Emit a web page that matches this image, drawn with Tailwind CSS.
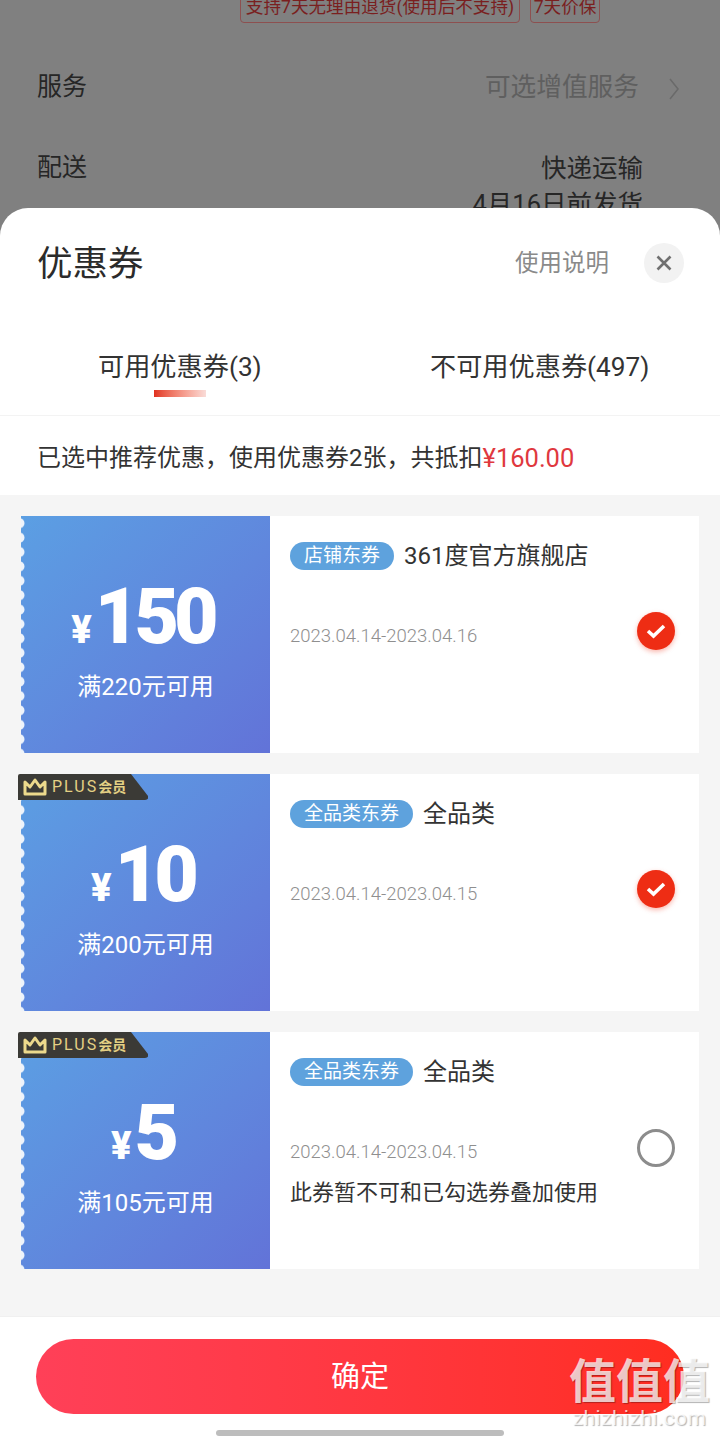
<!DOCTYPE html>
<html lang="zh">
<head>
<meta charset="UTF-8">
<meta name="viewport" content="width=device-width, initial-scale=1.0">
<title>优惠券</title>
<script src="https://cdn.jsdelivr.net/npm/@tailwindcss/browser@4"></script>
</head>
<body class="m-0 bg-[#808080] font-['Roboto','Noto_Sans_CJK_SC',sans-serif]">
<div class="relative w-[720px] h-[1436px] overflow-hidden">

  <!-- dimmed page behind the sheet -->
  <div class="h-[240px] -mb-[32px] overflow-hidden text-[25px] text-[#262626]">
    <div class="flex justify-end gap-[10px] pr-[120px] -mt-[8px] text-[17.6px] leading-[28px] text-[#7a1f1f]">
      <span class="border border-[#8d5050] rounded-[4px] w-[280px] text-center h-[31px] whitespace-nowrap">支持7天无理由退货(使用后不支持)</span>
      <span class="border border-[#8d5050] rounded-[4px] w-[70px] text-center h-[31px] whitespace-nowrap">7天价保</span>
    </div>
    <div class="flex items-center justify-between pl-[37px] pr-[41px] mt-[46px] h-[36px]">
      <span>服务</span>
      <span class="flex items-center text-[25.7px] text-[#5f5f5f]">可选增值服务
        <svg class="ml-[30px] mt-[3px]" width="10" height="22" viewBox="0 0 10 22" fill="none" stroke="#6a6a6a" stroke-width="1.6"><path d="M1 1l8 10-8 10"/></svg>
      </span>
    </div>
    <div class="flex justify-between pl-[37px] pr-[77px] mt-[45px] leading-[36px]">
      <span>配送</span>
      <div class="text-right text-[25.5px]"><div>快递运输</div><div>4月16日前发货</div></div>
    </div>
  </div>

  <!-- sheet -->
  <div class="relative bg-white rounded-t-[28px] h-[1228px] flex flex-col">
    <div class="flex items-center h-[112px] pl-[37px] pr-[36px]">
      <h1 class="text-[35.5px] font-normal text-[#2b2b2b] leading-none mt-[2px]">优惠券</h1>
      <span class="ml-auto text-[23.5px] text-[#8a8a8a]">使用说明</span>
      <span class="ml-[35px] -mt-[2px] w-[40px] h-[40px] rounded-full bg-[#f2f2f2] flex items-center justify-center">
        <svg width="16" height="16" viewBox="0 0 16 16" fill="none" stroke="#707070" stroke-width="2.6"><path d="M1.5 1.5l13 13M14.5 1.5l-13 13"/></svg>
      </span>
    </div>

    <div class="flex h-[96px] border-b border-[#f3f3f3] text-[26.2px] text-[#333]">
      <div class="relative w-[360px] pt-[27px] pl-[98px] leading-[40px]">可用优惠券(3)
        <div class="absolute left-[154px] top-[70px] w-[52px] h-[7px] bg-gradient-to-r from-[#e0301e] to-[#f9dcd8]"></div>
      </div>
      <div class="flex-1 pt-[27px] pl-[70px] leading-[40px]">不可用优惠券(497)</div>
    </div>

    <div class="h-[79px] pl-[37px] pt-[5px] flex items-center text-[24px] text-[#333]">已选中推荐优惠，使用优惠券2张，共抵扣<span class="text-[25.5px] text-[#e0383e]">¥160.00</span></div>

    <div class="flex-1 bg-[#f5f5f5] pt-[21px] pl-[21px] pr-[21px] flex flex-col gap-[21px]">

      <!-- coupon 1 -->
      <div class="relative flex h-[237px] bg-white">
        <div class="relative w-[249px] bg-gradient-to-br from-[#5b9fe3] to-[#6273d8] text-white flex flex-col items-center">
          <svg class="absolute left-0 top-0" width="5" height="237"><defs><pattern id="sc1" width="5" height="14.4" patternUnits="userSpaceOnUse"><circle cx="-1.5" cy="7.2" r="5" fill="#eef4fb"/></pattern></defs><rect width="5" height="237" fill="url(#sc1)"/></svg>
          <div class="flex items-baseline mt-[55px] h-[92px] -ml-[6px]">
            <span class="text-[38px] font-black leading-none mr-[3px]">¥</span>
            <span class="text-[77px] font-black leading-[92px] tracking-[-5px]">150</span>
          </div>
          <div class="text-[24px] leading-[30px] mt-[9px]">满220元可用</div>
        </div>
        <div class="relative flex-1 pl-[20px] pt-[26px]">
          <div class="flex items-center h-[28px]">
            <span class="bg-[#5ea2dd] text-white text-[19px] rounded-full w-[104px] h-[28px] leading-[28px] text-center">店铺东券</span>
            <span class="ml-[10px] text-[24px] text-[#333]">361度官方旗舰店</span>
          </div>
          <div class="mt-[52px] text-[18.5px] font-light text-[#8f8f8f] leading-[28px]">2023.04.14-2023.04.16</div>
          <span class="absolute left-[367px] top-[96px] w-[38px] h-[38px] rounded-full bg-[#ee2d14] flex items-center justify-center shadow-[0_2px_5px_rgba(238,45,20,0.35)]">
            <svg width="22" height="16" viewBox="0 0 22 16" fill="none" stroke="#fff" stroke-width="3.6"><path d="M3 8l5.5 5L19 3"/></svg>
          </span>
        </div>
      </div>

      <!-- coupon 2 -->
      <div class="relative flex h-[237px] bg-white">
        <div class="relative w-[249px] bg-gradient-to-br from-[#5b9fe3] to-[#6273d8] text-white flex flex-col items-center">
          <svg class="absolute left-0 top-0" width="5" height="237"><defs><pattern id="sc2" width="5" height="14.4" patternUnits="userSpaceOnUse"><circle cx="-1.5" cy="7.2" r="5" fill="#eef4fb"/></pattern></defs><rect width="5" height="237" fill="url(#sc2)"/></svg>
          <div class="flex items-baseline mt-[55px] h-[92px] -ml-[6px]">
            <span class="text-[38px] font-black leading-none mr-[3px]">¥</span>
            <span class="text-[77px] font-black leading-[92px] tracking-[-5px]">10</span>
          </div>
          <div class="text-[24px] leading-[30px] mt-[9px]">满200元可用</div>
        </div>
        <div class="absolute -left-[3px] top-0 w-[130px] h-[26px]">
          <svg class="absolute inset-0" width="130" height="26"><path d="M2 0H113L130 22Q131 26 127 26H0V2Q0 0 2 0Z" fill="#3b3a36"/></svg>
          <svg class="absolute left-[4px] top-[3px]" width="26" height="20" viewBox="0 0 26 20" fill="none" stroke="#ecd98c" stroke-width="3" stroke-linejoin="round"><path d="M3 5l5 5 5-7 5 7 5-5v12H3z"/></svg>
          <span class="absolute left-[34px] top-0 text-[16px] leading-[26px] tracking-[2px] text-[#e4d084] whitespace-nowrap">PLUS<span class="text-[14px] font-bold tracking-normal">会员</span></span>
        </div>
        <div class="relative flex-1 pl-[20px] pt-[26px]">
          <div class="flex items-center h-[28px]">
            <span class="bg-[#5ea2dd] text-white text-[19px] rounded-full w-[123px] h-[28px] leading-[28px] text-center">全品类东券</span>
            <span class="ml-[10px] text-[24px] text-[#333]">全品类</span>
          </div>
          <div class="mt-[52px] text-[18.5px] font-light text-[#8f8f8f] leading-[28px]">2023.04.14-2023.04.15</div>
          <span class="absolute left-[367px] top-[96px] w-[38px] h-[38px] rounded-full bg-[#ee2d14] flex items-center justify-center shadow-[0_2px_5px_rgba(238,45,20,0.35)]">
            <svg width="22" height="16" viewBox="0 0 22 16" fill="none" stroke="#fff" stroke-width="3.6"><path d="M3 8l5.5 5L19 3"/></svg>
          </span>
        </div>
      </div>

      <!-- coupon 3 -->
      <div class="relative flex h-[237px] bg-white">
        <div class="relative w-[249px] bg-gradient-to-br from-[#5b9fe3] to-[#6273d8] text-white flex flex-col items-center">
          <svg class="absolute left-0 top-0" width="5" height="237"><defs><pattern id="sc3" width="5" height="14.4" patternUnits="userSpaceOnUse"><circle cx="-1.5" cy="7.2" r="5" fill="#eef4fb"/></pattern></defs><rect width="5" height="237" fill="url(#sc3)"/></svg>
          <div class="flex items-baseline mt-[55px] h-[92px] -ml-[6px]">
            <span class="text-[38px] font-black leading-none mr-[3px]">¥</span>
            <span class="text-[77px] font-black leading-[92px] tracking-[-5px]">5</span>
          </div>
          <div class="text-[24px] leading-[30px] mt-[9px]">满105元可用</div>
        </div>
        <div class="absolute -left-[3px] top-0 w-[130px] h-[26px]">
          <svg class="absolute inset-0" width="130" height="26"><path d="M2 0H113L130 22Q131 26 127 26H0V2Q0 0 2 0Z" fill="#3b3a36"/></svg>
          <svg class="absolute left-[4px] top-[3px]" width="26" height="20" viewBox="0 0 26 20" fill="none" stroke="#ecd98c" stroke-width="3" stroke-linejoin="round"><path d="M3 5l5 5 5-7 5 7 5-5v12H3z"/></svg>
          <span class="absolute left-[34px] top-0 text-[16px] leading-[26px] tracking-[2px] text-[#e4d084] whitespace-nowrap">PLUS<span class="text-[14px] font-bold tracking-normal">会员</span></span>
        </div>
        <div class="relative flex-1 pl-[20px] pt-[26px]">
          <div class="flex items-center h-[28px]">
            <span class="bg-[#5ea2dd] text-white text-[19px] rounded-full w-[123px] h-[28px] leading-[28px] text-center">全品类东券</span>
            <span class="ml-[10px] text-[24px] text-[#333]">全品类</span>
          </div>
          <div class="mt-[52px] text-[18.5px] font-light text-[#8f8f8f] leading-[28px]">2023.04.14-2023.04.15</div>
          <div class="mt-[13px] text-[22px] text-[#333] leading-[28px]">此券暂不可和已勾选券叠加使用</div>
          <span class="absolute left-[367px] top-[97px] w-[38px] h-[38px] rounded-full border-[3px] border-[#8c8c8c] bg-white"></span>
        </div>
      </div>
    </div>

    <div class="h-[120px] bg-white border-t border-[#f0f0f0] pt-[22px] px-[36px]">
      <button class="w-full h-[75px] pt-[3px] rounded-full bg-gradient-to-r from-[#ff4058] to-[#ff2d1f] text-white text-[29px]">确定</button>
    </div>
  </div>

  <!-- home indicator -->
  <div class="absolute left-[216px] top-[1430px] w-[288px] h-[6px] rounded-full bg-[#bdbdbd]"></div>

  <!-- watermark -->
  <div class="absolute left-[567px] top-[1353px] w-[145px] text-center text-white/75 [text-shadow:1px_1px_1px_rgba(0,0,0,0.3)]">
    <div class="text-[47px] font-bold leading-[58px] whitespace-nowrap">值值值</div>
    <div class="text-[21px] leading-[14px] tracking-[0.4px] whitespace-nowrap">zhizhizhi.com</div>
  </div>
</div>
</body>
</html>
